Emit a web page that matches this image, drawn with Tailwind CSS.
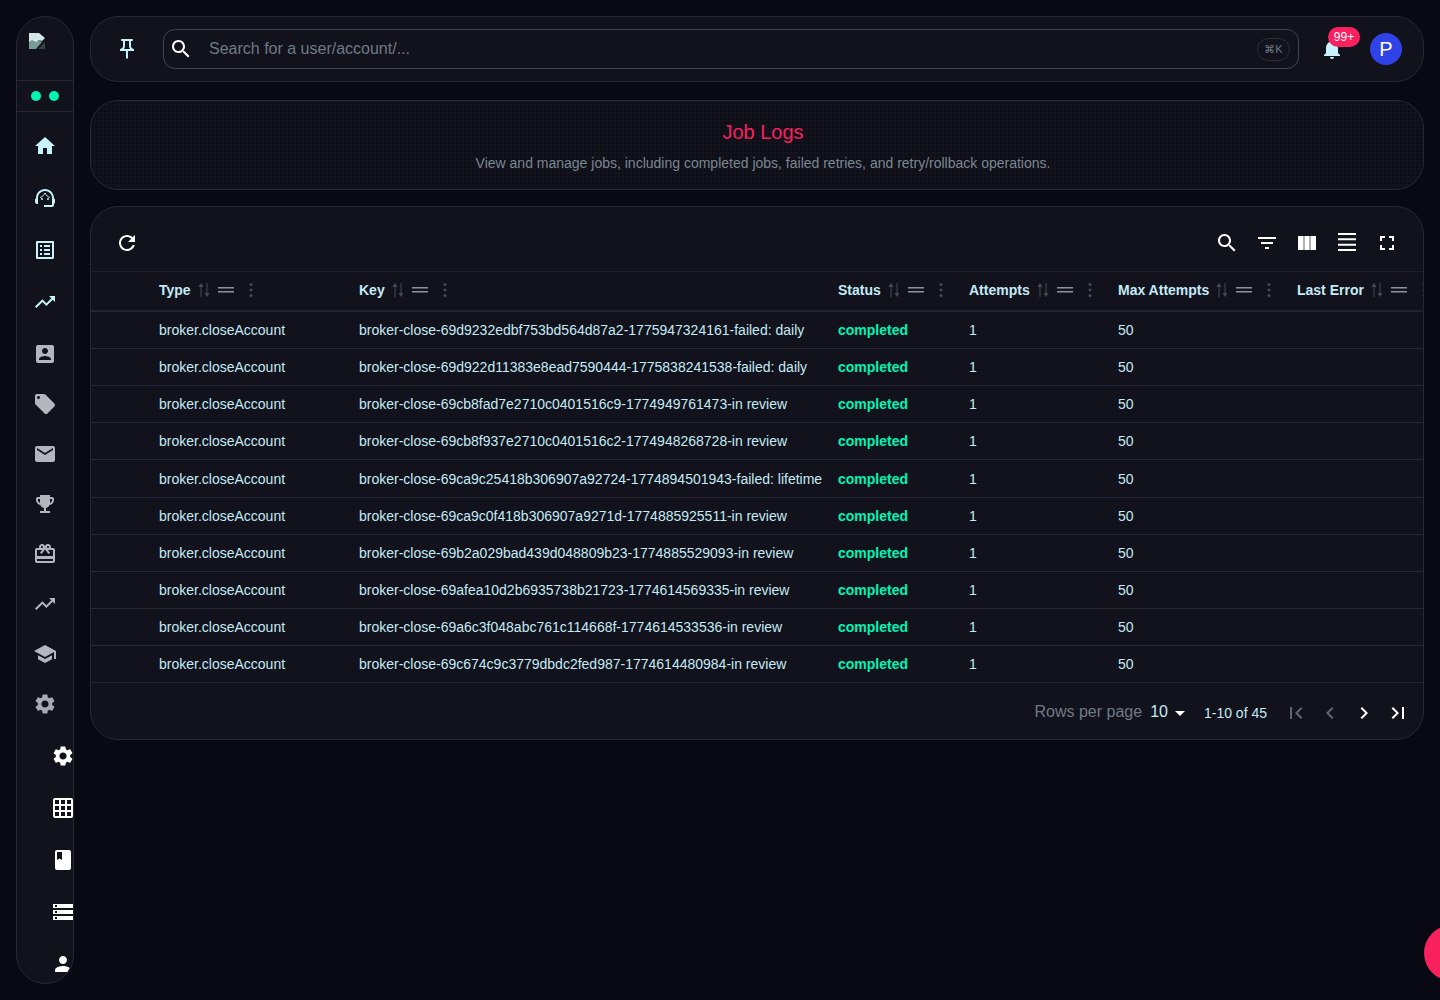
<!DOCTYPE html>
<html lang="en">
<head>
    <meta charset="UTF-8">
    <meta name="viewport" content="width=device-width, initial-scale=1.0">
    <title>Job Logs</title>
    <script src="https://cdn.jsdelivr.net/npm/@tailwindcss/browser@4"></script>
</head>
<body class="bg-[#080912] h-[1000px] overflow-hidden font-['Liberation_Sans',Arial,sans-serif] text-[#c5eaf5] relative">
    <div class="flex gap-4 p-4 h-[1000px] items-start">
        <!-- Sidebar -->
        <aside class="w-[58px] h-[968px] shrink-0 rounded-[30px] border border-[#262833] bg-[#11121c] overflow-hidden flex flex-col">
            <div class="h-[64px] shrink-0 border-b border-[#262833] pl-3 pt-4">
                <svg class="w-4 h-4" viewBox="0 0 16 16"><path d="M0 0h10l6 5-3 3-3-1-4 4-3-2-3 2z" fill="#d5e4e6"/><path d="M0 9l3-2 4 2 3-2 3 2-6 7H0z" fill="#7a9c96"/><path d="M9 16l7-7v7z" fill="#3a3f44"/></svg>
            </div>
            <div class="h-[31px] shrink-0 border-b border-[#262833] flex items-center justify-center gap-2">
                <span class="w-[10px] h-[10px] rounded-full bg-[#00f5b4]"></span>
                <span class="w-[10px] h-[10px] rounded-full bg-[#00f5b4]"></span>
            </div>
            <nav class="flex flex-col items-center pt-[8px]">
                <a class="h-[52px] flex items-center justify-center text-[#c9f3fb]"><svg class="w-6 h-6" viewBox="0 0 24 24" fill="currentColor"><path d="M10 20v-6h4v6h5v-8h3L12 3 2 12h3v8z"/></svg></a>
                <a class="h-[52px] flex items-center justify-center text-[#c9f3fb]"><svg class="w-6 h-6" viewBox="0 0 24 24" fill="currentColor"><path d="M21 12.220C21 6.730 16.740 3 12 3c-4.690 0-9 3.650-9 9.280-.6.340-1 .98-1 1.720v2c0 1.100.9 2 2 2h1v-6.100c0-3.870 3.130-7 7-7s7 3.130 7 7V19h-8v2h8c1.100 0 2-.9 2-2v-1.220c.59-.31 1-.92 1-1.640v-2.300c0-.7-.41-1.310-1-1.620"/><circle cx="9" cy="13" r="1"/><circle cx="15" cy="13" r="1"/><path d="M7 11.500c2.200-.6 4-2.200 5-4.500 1 2.300 2.800 3.900 5 4.500" fill="none" stroke="currentColor"/></svg></a>
                <a class="h-[52px] flex items-center justify-center text-[#c9f3fb]"><svg class="w-6 h-6" viewBox="0 0 24 24" fill="currentColor"><path d="M19 5v14H5V5zm1.100-2H3.900c-.5 0-.9.4-.9.9v16.200c0 .4.4.9.9.9h16.200c.4 0 .9-.5.9-.9V3.900c0-.5-.5-.9-.9-.9M11 7h6v2h-6zm0 4h6v2h-6zm0 4h6v2h-6zM7 7h2v2H7zm0 4h2v2H7zm0 4h2v2H7z"/></svg></a>
                <a class="h-[52px] flex items-center justify-center text-[#c9f3fb]"><svg class="w-6 h-6" viewBox="0 0 24 24" fill="currentColor"><path d="m16 6 2.290 2.290-4.880 4.880-4-4L2 16.590 3.410 18l6-6 4 4 6.300-6.290L22 12V6z"/></svg></a>
                <a class="h-[51px] flex items-center justify-center text-[#b5b6bd]"><svg class="w-6 h-6" viewBox="0 0 24 24" fill="currentColor"><path d="M3 5v14c0 1.100.89 2 2 2h14c1.100 0 2-.9 2-2V5c0-1.100-.9-2-2-2H5c-1.110 0-2 .9-2 2m12 4c0 1.660-1.340 3-3 3s-3-1.340-3-3 1.340-3 3-3 3 1.340 3 3m-9 8c0-2 4-3.100 6-3.100s6 1.100 6 3.100v1H6z"/></svg></a>
                <a class="h-[50px] flex items-center justify-center text-[#b5b6bd]"><svg class="w-6 h-6" viewBox="0 0 24 24" fill="currentColor"><path d="m21.410 11.580-9-9C12.050 2.220 11.550 2 11 2H4c-1.100 0-2 .9-2 2v7c0 .55.22 1.050.59 1.420l9 9c.36.36.86.58 1.410.58.55 0 1.050-.22 1.410-.59l7-7c.37-.36.59-.86.59-1.410 0-.55-.23-1.060-.59-1.420M5.500 7C4.670 7 4 6.330 4 5.500S4.670 4 5.500 4 7 4.670 7 5.500 6.330 7 5.500 7"/></svg></a>
                <a class="h-[50px] flex items-center justify-center text-[#b5b6bd]"><svg class="w-6 h-6" viewBox="0 0 24 24" fill="currentColor"><path d="M20 4H4c-1.100 0-1.990.9-1.990 2L2 18c0 1.100.9 2 2 2h16c1.100 0 2-.9 2-2V6c0-1.100-.9-2-2-2m0 4-8 5-8-5V6l8 5 8-5z"/></svg></a>
                <a class="h-[50px] flex items-center justify-center text-[#b5b6bd]"><svg class="w-6 h-6" viewBox="0 0 24 24" fill="currentColor"><path d="M19 5h-2V3H7v2H5c-1.100 0-2 .9-2 2v1c0 2.550 1.920 4.630 4.390 4.940.63 1.500 1.980 2.630 3.610 2.960V19H7v2h10v-2h-4v-3.100c1.630-.33 2.980-1.460 3.610-2.960C19.080 12.630 21 10.550 21 8V7c0-1.100-.9-2-2-2M5 8V7h2v3.820C5.840 10.400 5 9.300 5 8m14 0c0 1.300-.84 2.400-2 2.820V7h2z"/></svg></a>
                <a class="h-[50px] flex items-center justify-center text-[#b5b6bd]"><svg class="w-6 h-6" viewBox="0 0 24 24" fill="currentColor"><path d="M20 6h-2.180c.11-.31.18-.65.18-1 0-1.660-1.340-3-3-3-1.050 0-1.960.54-2.500 1.350l-.5.67-.5-.68C10.960 2.540 10.050 2 9 2 7.340 2 6 3.340 6 5c0 .35.07.69.18 1H4c-1.110 0-1.990.89-1.990 2L2 19c0 1.110.89 2 2 2h16c1.110 0 2-.89 2-2V8c0-1.110-.89-2-2-2m-5-2c.55 0 1 .45 1 1s-.45 1-1 1-1-.45-1-1 .45-1 1-1M9 4c.55 0 1 .45 1 1s-.45 1-1 1-1-.45-1-1 .45-1 1-1m11 15H4v-2h16zm0-5H4V8h5.080L7 10.830 8.620 12 11 8.760l1-1.360 1 1.360L15.380 12 17 10.830 14.920 8H20z"/></svg></a>
                <a class="h-[50px] flex items-center justify-center text-[#b5b6bd]"><svg class="w-6 h-6" viewBox="0 0 24 24" fill="currentColor"><path d="m16 6 2.290 2.290-4.880 4.880-4-4L2 16.590 3.410 18l6-6 4 4 6.300-6.290L22 12V6z"/></svg></a>
                <a class="h-[50px] flex items-center justify-center text-[#b5b6bd]"><svg class="w-6 h-6" viewBox="0 0 24 24" fill="currentColor"><path d="M5 13.180v4L12 21l7-3.820v-4L12 17zM12 3 1 9l11 6 9-4.910V17h2V9z"/></svg></a>
                <a class="h-[50px] flex items-center justify-center text-[#a8a9b0]"><svg class="w-6 h-6" viewBox="0 0 24 24" fill="currentColor"><path d="M19.140 12.940c.04-.3.060-.61.060-.94 0-.32-.02-.64-.07-.94l2.030-1.580c.18-.14.230-.41.120-.61l-1.920-3.320c-.12-.22-.37-.29-.59-.22l-2.390.96c-.5-.38-1.030-.7-1.620-.94l-.36-2.540c-.04-.24-.24-.41-.48-.41h-3.840c-.24 0-.43.170-.47.410l-.36 2.540c-.59.240-1.130.57-1.620.94l-2.390-.96c-.22-.08-.47 0-.59.220L2.740 8.870c-.12.210-.08.470.12.610l2.030 1.580c-.05.3-.09.630-.09.940s.02.640.07.940l-2.030 1.580c-.18.140-.23.410-.12.610l1.920 3.320c.12.220.37.290.59.220l2.390-.96c.5.380 1.030.7 1.620.94l.36 2.540c.05.240.24.410.48.410h3.840c.24 0 .44-.17.470-.41l.36-2.540c.59-.24 1.130-.56 1.620-.94l2.390.96c.22.080.47 0 .59-.22l1.920-3.320c.12-.22.070-.47-.12-.61zM12 15.600c-1.980 0-3.600-1.620-3.600-3.600s1.620-3.600 3.600-3.600 3.600 1.620 3.600 3.600-1.620 3.600-3.600 3.600"/></svg></a>
            </nav>
            <!-- submenu icons, pushed past the rail's edge and clipped -->
            <div class="flex flex-col items-center w-6 ml-[34px] mt-[1px] text-white">
                <a class="h-[52px] flex items-center justify-center"><svg class="w-6 h-6 shrink-0" viewBox="0 0 24 24" fill="currentColor"><path d="M19.140 12.940c.04-.3.060-.61.060-.94 0-.32-.02-.64-.07-.94l2.030-1.580c.18-.14.230-.41.120-.61l-1.920-3.320c-.12-.22-.37-.29-.59-.22l-2.390.96c-.5-.38-1.030-.7-1.620-.94l-.36-2.540c-.04-.24-.24-.41-.48-.41h-3.840c-.24 0-.43.170-.47.410l-.36 2.540c-.59.240-1.130.57-1.620.94l-2.390-.96c-.22-.08-.47 0-.59.220L2.740 8.870c-.12.210-.08.470.12.610l2.030 1.580c-.05.3-.09.630-.09.940s.02.640.07.940l-2.030 1.580c-.18.140-.23.410-.12.610l1.920 3.320c.12.220.37.290.59.220l2.390-.96c.5.380 1.030.7 1.620.94l.36 2.540c.05.240.24.410.48.410h3.840c.24 0 .44-.17.470-.41l.36-2.540c.59-.24 1.130-.56 1.620-.94l2.390.96c.22.080.47 0 .59-.22l1.920-3.320c.12-.22.070-.47-.12-.61zM12 15.600c-1.980 0-3.600-1.620-3.600-3.600s1.620-3.600 3.600-3.600 3.600 1.620 3.600 3.600-1.620 3.600-3.600 3.600"/></svg></a>
                <a class="h-[52px] flex items-center justify-center"><svg class="w-6 h-6 shrink-0" viewBox="0 0 24 24" fill="currentColor"><path d="M20 2H4c-1.100 0-2 .9-2 2v16c0 1.100.9 2 2 2h16c1.100 0 2-.9 2-2V4c0-1.100-.9-2-2-2M8 20H4v-4h4zm0-6H4v-4h4zm0-6H4V4h4zm6 12h-4v-4h4zm0-6h-4v-4h4zm0-6h-4V4h4zm6 12h-4v-4h4zm0-6h-4v-4h4zm0-6h-4V4h4z"/></svg></a>
                <a class="h-[52px] flex items-center justify-center"><svg class="w-6 h-6 shrink-0" viewBox="0 0 24 24" fill="currentColor"><path d="M18 2H6c-1.100 0-2 .9-2 2v16c0 1.100.9 2 2 2h12c1.100 0 2-.9 2-2V4c0-1.100-.9-2-2-2M6 4h5v8l-2.500-1.500L6 12z"/></svg></a>
                <a class="h-[52px] flex items-center justify-center"><svg class="w-6 h-6 shrink-0" viewBox="0 0 24 24" fill="currentColor"><path d="M2 20h20v-4H2zm2-3h2v2H4zM2 4v4h20V4zm4 3H4V5h2zm-4 7h20v-4H2zm2-3h2v2H4z"/></svg></a>
                <a class="h-[52px] flex items-center justify-center"><svg class="w-6 h-6 shrink-0" viewBox="0 0 24 24" fill="currentColor"><path d="M12 12c2.210 0 4-1.790 4-4s-1.790-4-4-4-4 1.790-4 4 1.790 4 4 4m0 2c-2.670 0-8 1.340-8 4v2h16v-2c0-2.660-5.330-4-8-4"/></svg></a>
            </div>
        </aside>

        <main class="w-[1334px] shrink-0 flex flex-col">
            <!-- Top bar -->
            <header class="h-[66px] rounded-[28px] border border-[#262833] bg-[#11121c] flex items-center pl-[24px]">
                <svg class="w-6 h-6 text-[#c9f3fb] shrink-0" viewBox="0 0 24 24" fill="currentColor"><path d="M14 4v5c0 1.120.37 2.160 1 3H9c.65-.86 1-1.900 1-3V4zm3-2H7c-.55 0-1 .45-1 1s.45 1 1 1h1v5c0 1.660-1.340 3-3 3v2h5.970v7l1 1 1-1v-7H19v-2c-1.660 0-3-1.340-3-3V4h1c.55 0 1-.45 1-1s-.45-1-1-1"/></svg>
                <div class="ml-6 w-[1136px] shrink-0 h-10 rounded-xl border border-[#42444f] flex items-center pl-[5px] pr-2">
                    <svg class="w-6 h-6 text-white shrink-0" viewBox="0 0 24 24" fill="currentColor"><path d="M15.500 14h-.79l-.28-.27C15.410 12.590 16 11.110 16 9.500 16 5.910 13.090 3 9.500 3S3 5.910 3 9.500 5.910 16 9.500 16c1.610 0 3.090-.59 4.230-1.570l.27.28v.79l5 4.990L20.490 19zm-6 0C7.010 14 5 11.990 5 9.500S7.010 5 9.500 5 14 7.010 14 9.500 11.990 14 9.500 14"/></svg>
                    <span class="ml-[16px] text-base text-[#6f7a84] flex-1">Search for a user/account/...</span>
                    <span class="w-[33px] h-[23px] rounded-full border border-[#2c2e39] text-[11px] text-[#6f7a84] flex items-center justify-center">⌘K</span>
                </div>
                <div class="relative ml-[21px] w-6 h-6 shrink-0 text-[#c9f3fb]">
                    <svg class="w-6 h-6" viewBox="0 0 24 24" fill="currentColor"><path d="M12 22c1.100 0 2-.9 2-2h-4c0 1.100.9 2 2 2m6-6v-5c0-3.070-1.630-5.640-4.500-6.320V4c0-.83-.67-1.500-1.500-1.500s-1.500.67-1.500 1.500v.68C7.640 5.360 6 7.920 6 11v5l-2 2v1h16v-1z"/></svg>
                    <span class="absolute left-[8px] -top-[10px] h-5 w-8 rounded-full bg-[#f9205f] text-white text-xs flex items-center justify-center">99+</span>
                </div>
                <div class="ml-[26px] w-8 h-8 shrink-0 rounded-full bg-[#2f43e6] text-white text-xl flex items-center justify-center">P</div>
            </header>

            <!-- Page title -->
            <section class="mt-[18px] h-[90px] rounded-[28px] border border-[#262833] bg-[#11121c] bg-[radial-gradient(#0b0c14_1px,transparent_1px)] bg-[length:4px_4px] flex flex-col items-center pl-3">
                <h1 class="mt-[19px] text-xl leading-6 text-[#f9205f]">Job Logs</h1>
                <p class="mt-[9px] text-sm leading-5 text-[#7b8791]">View and manage jobs, including completed jobs, failed retries, and retry/rollback operations.</p>
            </section>

            <!-- Table card -->
            <section class="mt-4 h-[534px] rounded-[28px] border border-[#262833] bg-[#11121c] overflow-hidden flex flex-col">
                <div class="h-[64px] shrink-0 flex items-center justify-between pl-6 pr-6 pt-2 text-white">
                    <svg class="w-6 h-6" viewBox="0 0 24 24" fill="currentColor"><path d="M17.650 6.350C16.200 4.900 14.210 4 12 4c-4.420 0-7.990 3.580-7.990 8s3.570 8 7.990 8c3.730 0 6.840-2.550 7.730-6h-2.080c-.82 2.330-3.040 4-5.650 4-3.310 0-6-2.690-6-6s2.690-6 6-6c1.660 0 3.140.69 4.220 1.780L13 11h7V4z"/></svg>
                    <div class="flex items-center gap-4">
                        <svg class="w-6 h-6" viewBox="0 0 24 24" fill="currentColor"><path d="M15.500 14h-.79l-.28-.27C15.410 12.590 16 11.110 16 9.500 16 5.910 13.090 3 9.500 3S3 5.910 3 9.500 5.910 16 9.500 16c1.610 0 3.090-.59 4.230-1.570l.27.28v.79l5 4.990L20.490 19zm-6 0C7.010 14 5 11.990 5 9.500S7.010 5 9.500 5 14 7.010 14 9.500 11.990 14 9.500 14"/></svg>
                        <svg class="w-6 h-6" viewBox="0 0 24 24" fill="currentColor"><path d="M10 18h4v-2h-4zM3 6v2h18V6zm3 7h12v-2H6z"/></svg>
                        <svg class="w-6 h-6" viewBox="0 0 24 24" fill="currentColor"><path d="M3 5h5.670v14H3zm6.330 0h5.340v14H9.330zm6 0H21v14h-5.670z"/></svg>
                        <svg class="w-6 h-6" viewBox="0 0 24 24" fill="currentColor"><path d="M3 2h18v2H3zm0 5.330h18v2H3zm0 5.340h18v2H3zM3 18h18v2H3z"/></svg>
                        <svg class="w-6 h-6" viewBox="0 0 24 24" fill="currentColor"><path d="M7 14H5v5h5v-2H7zm-2-4h2V7h3V5H5zm12 7h-3v2h5v-5h-2zM14 5v2h3v3h2V5z"/></svg>
                    </div>
                </div>
                <div class="flex-1 overflow-hidden">
                    <table class="table-fixed w-[1400px] border-collapse text-sm text-left">
                        <thead>
                            <tr class="h-[39.7px] border-t border-b-2 border-t-[#1e2029] border-b-[#222530]">
                                <th class="w-[52px]"></th>
                                <th class="w-[200px] pl-4 pb-[2px] font-bold"><div class="flex items-center">Type
                                    <svg class="ml-[5px] w-4 h-4 text-[#474a55]" viewBox="0 0 16 16" fill="currentColor"><path d="M5 1 2.500 5H4.500v10h1V5h2zM11 15l2.500-4H11.500V1h-1v10h-2z"/></svg>
                                    <svg class="ml-[6px] w-4 h-4 text-[#8b939b]" viewBox="0 0 16 16" fill="currentColor"><path d="M0 5h16v1.500H0zM0 9h16v1.500H0z"/></svg>
                                    <svg class="ml-[9px] w-4 h-4 text-[#474a55]" viewBox="0 0 16 16" fill="currentColor"><circle cx="8" cy="2.500" r="1.500"/><circle cx="8" cy="8" r="1.500"/><circle cx="8" cy="13.500" r="1.500"/></svg></div></th>
                                <th class="w-[479px] pl-4 pb-[2px] font-bold"><div class="flex items-center">Key
                                    <svg class="ml-[5px] w-4 h-4 text-[#474a55]" viewBox="0 0 16 16" fill="currentColor"><path d="M5 1 2.500 5H4.500v10h1V5h2zM11 15l2.500-4H11.500V1h-1v10h-2z"/></svg>
                                    <svg class="ml-[6px] w-4 h-4 text-[#8b939b]" viewBox="0 0 16 16" fill="currentColor"><path d="M0 5h16v1.500H0zM0 9h16v1.500H0z"/></svg>
                                    <svg class="ml-[9px] w-4 h-4 text-[#474a55]" viewBox="0 0 16 16" fill="currentColor"><circle cx="8" cy="2.500" r="1.500"/><circle cx="8" cy="8" r="1.500"/><circle cx="8" cy="13.500" r="1.500"/></svg></div></th>
                                <th class="w-[131px] pl-4 pb-[2px] font-bold"><div class="flex items-center">Status
                                    <svg class="ml-[5px] w-4 h-4 text-[#474a55]" viewBox="0 0 16 16" fill="currentColor"><path d="M5 1 2.500 5H4.500v10h1V5h2zM11 15l2.500-4H11.500V1h-1v10h-2z"/></svg>
                                    <svg class="ml-[6px] w-4 h-4 text-[#8b939b]" viewBox="0 0 16 16" fill="currentColor"><path d="M0 5h16v1.500H0zM0 9h16v1.500H0z"/></svg>
                                    <svg class="ml-[9px] w-4 h-4 text-[#474a55]" viewBox="0 0 16 16" fill="currentColor"><circle cx="8" cy="2.500" r="1.500"/><circle cx="8" cy="8" r="1.500"/><circle cx="8" cy="13.500" r="1.500"/></svg></div></th>
                                <th class="w-[149px] pl-4 pb-[2px] font-bold"><div class="flex items-center">Attempts
                                    <svg class="ml-[5px] w-4 h-4 text-[#474a55]" viewBox="0 0 16 16" fill="currentColor"><path d="M5 1 2.500 5H4.500v10h1V5h2zM11 15l2.500-4H11.500V1h-1v10h-2z"/></svg>
                                    <svg class="ml-[6px] w-4 h-4 text-[#8b939b]" viewBox="0 0 16 16" fill="currentColor"><path d="M0 5h16v1.500H0zM0 9h16v1.500H0z"/></svg>
                                    <svg class="ml-[9px] w-4 h-4 text-[#474a55]" viewBox="0 0 16 16" fill="currentColor"><circle cx="8" cy="2.500" r="1.500"/><circle cx="8" cy="8" r="1.500"/><circle cx="8" cy="13.500" r="1.500"/></svg></div></th>
                                <th class="w-[179px] pl-4 pb-[2px] font-bold"><div class="flex items-center">Max Attempts
                                    <svg class="ml-[5px] w-4 h-4 text-[#474a55]" viewBox="0 0 16 16" fill="currentColor"><path d="M5 1 2.500 5H4.500v10h1V5h2zM11 15l2.500-4H11.500V1h-1v10h-2z"/></svg>
                                    <svg class="ml-[6px] w-4 h-4 text-[#8b939b]" viewBox="0 0 16 16" fill="currentColor"><path d="M0 5h16v1.500H0zM0 9h16v1.500H0z"/></svg>
                                    <svg class="ml-[9px] w-4 h-4 text-[#474a55]" viewBox="0 0 16 16" fill="currentColor"><circle cx="8" cy="2.500" r="1.500"/><circle cx="8" cy="8" r="1.500"/><circle cx="8" cy="13.500" r="1.500"/></svg></div></th>
                                <th class="w-[210px] pl-4 pb-[2px] font-bold"><div class="flex items-center">Last Error
                                    <svg class="ml-[5px] w-4 h-4 text-[#474a55]" viewBox="0 0 16 16" fill="currentColor"><path d="M5 1 2.500 5H4.500v10h1V5h2zM11 15l2.500-4H11.500V1h-1v10h-2z"/></svg>
                                    <svg class="ml-[6px] w-4 h-4 text-[#8b939b]" viewBox="0 0 16 16" fill="currentColor"><path d="M0 5h16v1.500H0zM0 9h16v1.500H0z"/></svg>
                                    <svg class="ml-[9px] w-4 h-4 text-[#474a55]" viewBox="0 0 16 16" fill="currentColor"><circle cx="8" cy="2.500" r="1.500"/><circle cx="8" cy="8" r="1.500"/><circle cx="8" cy="13.500" r="1.500"/></svg></div></th>
                            </tr>
                        </thead>
                        <tbody>
                            <tr class="h-[37.2px] border-b border-[#262833]"><td></td><td class="pl-4">broker.closeAccount</td><td class="pl-4 whitespace-nowrap">broker-close-69d9232edbf753bd564d87a2-1775947324161-failed: daily</td><td class="pl-4 font-bold text-[#00f5b4]">completed</td><td class="pl-4">1</td><td class="pl-4">50</td><td></td></tr>
                            <tr class="h-[37.2px] border-b border-[#262833]"><td></td><td class="pl-4">broker.closeAccount</td><td class="pl-4 whitespace-nowrap">broker-close-69d922d11383e8ead7590444-1775838241538-failed: daily</td><td class="pl-4 font-bold text-[#00f5b4]">completed</td><td class="pl-4">1</td><td class="pl-4">50</td><td></td></tr>
                            <tr class="h-[37.2px] border-b border-[#262833]"><td></td><td class="pl-4">broker.closeAccount</td><td class="pl-4 whitespace-nowrap">broker-close-69cb8fad7e2710c0401516c9-1774949761473-in review</td><td class="pl-4 font-bold text-[#00f5b4]">completed</td><td class="pl-4">1</td><td class="pl-4">50</td><td></td></tr>
                            <tr class="h-[37.2px] border-b border-[#262833]"><td></td><td class="pl-4">broker.closeAccount</td><td class="pl-4 whitespace-nowrap">broker-close-69cb8f937e2710c0401516c2-1774948268728-in review</td><td class="pl-4 font-bold text-[#00f5b4]">completed</td><td class="pl-4">1</td><td class="pl-4">50</td><td></td></tr>
                            <tr class="h-[37.2px] border-b border-[#262833]"><td></td><td class="pl-4">broker.closeAccount</td><td class="pl-4 whitespace-nowrap">broker-close-69ca9c25418b306907a92724-1774894501943-failed: lifetime</td><td class="pl-4 font-bold text-[#00f5b4]">completed</td><td class="pl-4">1</td><td class="pl-4">50</td><td></td></tr>
                            <tr class="h-[37.2px] border-b border-[#262833]"><td></td><td class="pl-4">broker.closeAccount</td><td class="pl-4 whitespace-nowrap">broker-close-69ca9c0f418b306907a9271d-1774885925511-in review</td><td class="pl-4 font-bold text-[#00f5b4]">completed</td><td class="pl-4">1</td><td class="pl-4">50</td><td></td></tr>
                            <tr class="h-[37.2px] border-b border-[#262833]"><td></td><td class="pl-4">broker.closeAccount</td><td class="pl-4 whitespace-nowrap">broker-close-69b2a029bad439d048809b23-1774885529093-in review</td><td class="pl-4 font-bold text-[#00f5b4]">completed</td><td class="pl-4">1</td><td class="pl-4">50</td><td></td></tr>
                            <tr class="h-[37.2px] border-b border-[#262833]"><td></td><td class="pl-4">broker.closeAccount</td><td class="pl-4 whitespace-nowrap">broker-close-69afea10d2b6935738b21723-1774614569335-in review</td><td class="pl-4 font-bold text-[#00f5b4]">completed</td><td class="pl-4">1</td><td class="pl-4">50</td><td></td></tr>
                            <tr class="h-[37.2px] border-b border-[#262833]"><td></td><td class="pl-4">broker.closeAccount</td><td class="pl-4 whitespace-nowrap">broker-close-69a6c3f048abc761c114668f-1774614533536-in review</td><td class="pl-4 font-bold text-[#00f5b4]">completed</td><td class="pl-4">1</td><td class="pl-4">50</td><td></td></tr>
                            <tr class="h-[37.2px] border-b-2 border-[#222530]"><td></td><td class="pl-4">broker.closeAccount</td><td class="pl-4 whitespace-nowrap">broker-close-69c674c9c3779dbdc2fed987-1774614480984-in review</td><td class="pl-4 font-bold text-[#00f5b4]">completed</td><td class="pl-4">1</td><td class="pl-4">50</td><td></td></tr>
                        </tbody>
                    </table>
                </div>
                <div class="h-[56px] shrink-0 flex items-center justify-end pt-1 pr-[13px]">
                    <span class="text-base text-[#6f7a84] -mt-[2px]">Rows per page</span>
                    <span class="ml-2 text-base -mt-[2px]">10</span>
                    <svg class="w-6 h-6 text-white" viewBox="0 0 24 24" fill="currentColor"><path d="m7 10 5 5 5-5z"/></svg>
                    <span class="ml-[12px] text-sm">1-10 of 45</span>
                    <svg class="ml-[17px] w-6 h-6 text-[#5c6771]" viewBox="0 0 24 24" fill="currentColor"><path d="M18.410 16.590 13.820 12l4.590-4.590L17 6l-6 6 6 6zM6 6h2v12H6z"/></svg>
                    <svg class="ml-[10px] w-6 h-6 text-[#5c6771]" viewBox="0 0 24 24" fill="currentColor"><path d="M15.410 7.410 14 6l-6 6 6 6 1.410-1.410L10.830 12z"/></svg>
                    <svg class="ml-[10px] w-6 h-6 text-white" viewBox="0 0 24 24" fill="currentColor"><path d="M10 6 8.590 7.410 13.170 12l-4.580 4.590L10 18l6-6z"/></svg>
                    <svg class="ml-[10px] w-6 h-6 text-white" viewBox="0 0 24 24" fill="currentColor"><path d="M5.590 7.410 10.180 12l-4.590 4.590L7 18l6-6-6-6zM16 6h2v12h-2z"/></svg>
                </div>
            </section>
        </main>
    </div>
    <!-- floating button, mostly off screen -->
    <div class="absolute left-[1424px] top-[925px] w-14 h-14 rounded-full bg-[#f9205f]"></div>
</body>
</html>
